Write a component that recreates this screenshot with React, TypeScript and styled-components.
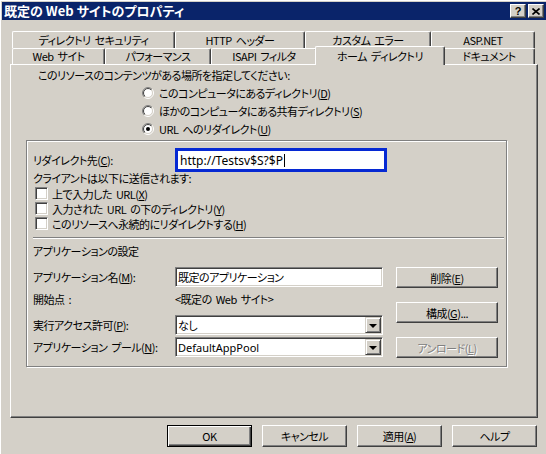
import React from 'react'
import styled, { createGlobalStyle, css } from 'styled-components'

const face = '#d4d0c8'
const shadow = '#808080'
const darkShadow = '#404040'

const GlobalStyle = createGlobalStyle`
  html, body {
    margin: 0;
    padding: 0;
    background: ${face};
  }
  body {
    font-family: "Noto Sans CJK JP", "Noto Sans", sans-serif;
    font-size: 11px;
    letter-spacing: -0.5px;
    word-spacing: 2px;
    color: #000;
    font-feature-settings: "palt" 1;
  }
`

const Window = styled.div`
  width: 546px;
  height: 454px;
  box-sizing: border-box;
  padding: 2px 0 0 2px;
  background: ${face};
  box-shadow: inset 1px 1px 0 #fff;
  display: flex;
  flex-direction: column;
  overflow: hidden;
`

const TitleBar = styled.div`
  height: 18px;
  background: #0a246a;
  display: flex;
  align-items: flex-start;
  padding-right: 2px;
`

const TitleText = styled.div`
  flex: 1;
  color: #fff;
  font-weight: bold;
  font-size: 13px;
  letter-spacing: 0;
  word-spacing: 0;
  line-height: 18px;
  padding-left: 2px;
  white-space: nowrap;
`

const CaptionButton = styled.div`
  width: 16px;
  height: 14px;
  margin-top: 2px;
  box-sizing: border-box;
  background: ${face};
  border: 1px solid;
  border-color: #fff ${darkShadow} ${darkShadow} #fff;
  box-shadow: inset -1px -1px 0 ${shadow};
  display: flex;
  align-items: center;
  justify-content: center;
  font-family: "Liberation Sans", Arial, sans-serif;
  font-weight: bold;
  font-size: 11px;
  letter-spacing: 0;
  line-height: 12px;
  & + & {
    margin-left: 2px;
  }
`

const Body = styled.div`
  padding: 11px 8px 0 8px;
  display: flex;
  flex-direction: column;
`

const TabStrip = styled.div`
  padding-left: 2px;
  display: flex;
  flex-direction: column;
`

const TabRow = styled.div`
  display: flex;
`

const Tab = styled.div<{ $w: number; $back?: boolean; $selected?: boolean }>`
  width: ${(p) => p.$w}px;
  height: ${(p) => (p.$back ? 17 : 16)}px;
  box-sizing: border-box;
  flex: none;
  background: ${face};
  border-left: 1px solid #fff;
  border-top: 1px solid #fff;
  border-right: 1px solid ${darkShadow};
  border-radius: 2px 2px 0 0;
  box-shadow: inset -1px 0 0 ${shadow};
  text-align: center;
  line-height: ${(p) => (p.$back ? 16 : 15)}px;
  white-space: nowrap;
  ${(p) =>
    p.$selected &&
    css`
      position: relative;
      z-index: 2;
      width: ${p.$w + 4}px;
      height: 19px;
      margin: -2px -2px -1px;
      line-height: 18px;
    `}
`

const Panel = styled.div`
  width: 528px;
  height: 354px;
  box-sizing: border-box;
  border: 1px solid;
  border-color: #fff ${darkShadow} ${darkShadow} #fff;
  box-shadow: inset -1px -1px 0 ${shadow};
  display: flex;
  flex-direction: column;
  align-items: flex-start;
`

const Heading = styled.div`
  margin: 3px 0 0 27px;
  line-height: 14px;
  white-space: nowrap;
`

const RadioList = styled.div`
  margin: 2px 0 0 131px;
  display: flex;
  flex-direction: column;
`

const OptionRow = styled.label<{ $h: number }>`
  height: ${(p) => p.$h}px;
  line-height: 14px;
  display: flex;
  align-items: center;
  gap: ${(p) => (p.$h === 18 ? 5 : 4)}px;
  white-space: nowrap;
`

const GroupBox = styled.div`
  margin: 2px 0 0 15px;
  width: 481px;
  height: 227px;
  box-sizing: border-box;
  border: 1px solid ${shadow};
  box-shadow: 1px 1px 0 #fff, inset 1px 1px 0 #fff;
  padding: 7px 2px 0 6px;
  display: flex;
  flex-direction: column;
`

const FieldRow = styled.div`
  display: flex;
  align-items: center;
  height: 24px;
`

const LabelCell = styled.div`
  width: 142px;
  flex: none;
  white-space: nowrap;
`

const RedirectBox = styled.div`
  width: 212px;
  height: 24px;
  box-sizing: border-box;
  border: 3px solid #0629d3;
  background: #fff;
  display: flex;
  align-items: center;
  padding-left: 2px;
  font-family: "Noto Sans", "Noto Sans CJK JP", sans-serif;
  font-size: 12px;
  letter-spacing: 0;
  white-space: nowrap;
`

const Caret = styled.span`
  display: inline-block;
  width: 1px;
  height: 13px;
  background: #000;
  margin-left: 1px;
`

const PlainLine = styled.div<{ $mt: number }>`
  margin-top: ${(p) => p.$mt}px;
  line-height: 14px;
  white-space: nowrap;
`

const CheckList = styled.div`
  margin: 1px 0 0 2px;
  display: flex;
  flex-direction: column;
`

const CheckBox = styled.span`
  width: 13px;
  height: 13px;
  box-sizing: border-box;
  flex: none;
  background: #fff;
  border: 1px solid;
  border-color: ${shadow} #fff #fff ${shadow};
  box-shadow: inset 1px 1px 0 ${darkShadow}, inset -1px -1px 0 ${face};
`

const Separator = styled.div`
  margin: 6px 0 0 0;
  height: 0;
  border-top: 1px solid ${shadow};
  border-bottom: 1px solid #fff;
`

const AppArea = styled.div`
  margin-top: 9px;
  display: flex;
  align-items: flex-start;
`

const AppGrid = styled.div`
  display: grid;
  grid-template-columns: 142px 208px;
  grid-template-rows: 20px 28px 22px 20px;
  align-items: start;
`

const GridLabel = styled.div<{ $h: number }>`
  height: ${(p) => p.$h}px;
  display: flex;
  align-items: center;
  white-space: nowrap;
`

const Sunken = styled.div`
  width: 208px;
  height: 20px;
  box-sizing: border-box;
  background: #fff;
  border: 1px solid;
  border-color: ${shadow} #fff #fff ${shadow};
  box-shadow: inset 1px 1px 0 ${darkShadow}, inset -1px -1px 0 ${face};
  display: flex;
  align-items: center;
  padding: 1px 1px 1px 2px;
  white-space: nowrap;
`

const FieldText = styled.span<{ $latin?: boolean }>`
  flex: 1;
  ${(p) =>
    p.$latin &&
    css`
      font-family: "Noto Sans", "Noto Sans CJK JP", sans-serif;
      letter-spacing: 0;
    `}
`

const DropButton = styled.span`
  width: 16px;
  height: 16px;
  box-sizing: border-box;
  flex: none;
  background: ${face};
  border: 1px solid;
  border-color: ${face} ${darkShadow} ${darkShadow} ${face};
  box-shadow: inset 1px 1px 0 #fff, inset -1px -1px 0 ${shadow};
  display: flex;
  align-items: center;
  justify-content: center;
  &::after {
    content: '';
    width: 0;
    height: 0;
    border-left: 4px solid transparent;
    border-right: 4px solid transparent;
    border-top: 4px solid #000;
    margin-top: 1px;
  }
`

const PlainValue = styled.div`
  height: 24px;
  display: flex;
  align-items: center;
  white-space: nowrap;
`

const ButtonColumn = styled.div`
  margin-left: 13px;
  display: flex;
  flex-direction: column;
  gap: 14px;
`

const Button = styled.div<{ $w: number; $default?: boolean; $disabled?: boolean }>`
  width: ${(p) => p.$w}px;
  height: ${(p) => (p.$w === 102 ? 21 : 22)}px;
  box-sizing: border-box;
  flex: none;
  background: ${face};
  display: flex;
  align-items: center;
  justify-content: center;
  white-space: nowrap;
  border: 1px solid;
  border-color: #fff ${darkShadow} ${darkShadow} #fff;
  box-shadow: inset -1px -1px 0 ${shadow};
  ${(p) =>
    p.$default &&
    css`
      border-color: #000;
      box-shadow: inset 1px 1px 0 #fff, inset -1px -1px 0 ${darkShadow}, inset -2px -2px 0 ${shadow};
    `}
  ${(p) =>
    p.$disabled &&
    css`
      color: ${shadow};
      text-shadow: 1px 1px 0 #fff;
    `}
`

const Footer = styled.div`
  margin: 7px 1px 0 0;
  display: flex;
  justify-content: flex-end;
  gap: 10px;
`

const Radio = ({ checked }: { checked?: boolean }) => (
  <svg width="12" height="12" viewBox="0 0 12 12">
    <defs>
      <linearGradient id="rOuter" x1="0" y1="0" x2="1" y2="1">
        <stop offset="0.5" stopColor={shadow} />
        <stop offset="0.5" stopColor="#fff" />
      </linearGradient>
      <linearGradient id="rInner" x1="0" y1="0" x2="1" y2="1">
        <stop offset="0.5" stopColor={darkShadow} />
        <stop offset="0.5" stopColor={face} />
      </linearGradient>
    </defs>
    <circle cx="6" cy="6" r="5.5" fill="none" stroke="url(#rOuter)" />
    <circle cx="6" cy="6" r="4.5" fill="#fff" stroke="url(#rInner)" />
    {checked && <circle cx="6" cy="6" r="2" fill="#000" />}
  </svg>
)

const backTabs = [
  { label: 'ディレクトリ セキュリティ', w: 163 },
  { label: 'HTTP ヘッダー', w: 130 },
  { label: 'カスタム エラー', w: 126 },
  { label: 'ASP.NET', w: 104 },
]

const frontTabs = [
  { label: 'Web サイト', w: 93 },
  { label: 'パフォーマンス', w: 106 },
  { label: 'ISAPI フィルタ', w: 106 },
  { label: 'ホーム ディレクトリ', w: 126, selected: true },
  { label: 'ドキュメント', w: 92 },
]

export default function App() {
  return (
    <>
      <GlobalStyle />
      <Window>
        <TitleBar>
          <TitleText>既定の Web サイトのプロパティ</TitleText>
          <CaptionButton>?</CaptionButton>
          <CaptionButton>
            <svg width="8" height="7" viewBox="0 0 8 7">
              <path d="M0.5 0.5 L7.5 6.5 M7.5 0.5 L0.5 6.5" stroke="#000" strokeWidth="1.6" />
            </svg>
          </CaptionButton>
        </TitleBar>

        <Body>
          <TabStrip>
            <TabRow>
              {backTabs.map((t) => (
                <Tab key={t.label} $w={t.w} $back>
                  {t.label}
                </Tab>
              ))}
            </TabRow>
            <TabRow>
              {frontTabs.map((t) => (
                <Tab key={t.label} $w={t.w} $selected={t.selected}>
                  {t.label}
                </Tab>
              ))}
            </TabRow>
          </TabStrip>

          <Panel>
            <Heading>このリソースのコンテンツがある場所を指定してください:</Heading>
            <RadioList>
              <OptionRow $h={18}>
                <Radio />
                <span>
                  このコンピュータにあるディレクトリ(<u>D</u>)
                </span>
              </OptionRow>
              <OptionRow $h={18}>
                <Radio />
                <span>
                  ほかのコンピュータにある共有ディレクトリ(<u>S</u>)
                </span>
              </OptionRow>
              <OptionRow $h={18}>
                <Radio checked />
                <span>
                  URL へのリダイレクト(<u>U</u>)
                </span>
              </OptionRow>
            </RadioList>

            <GroupBox>
              <FieldRow>
                <LabelCell>
                  リダイレクト先(<u>C</u>):
                </LabelCell>
                <RedirectBox>
                  http://Testsv$S?$P
                  <Caret />
                </RedirectBox>
              </FieldRow>
              <PlainLine $mt={-1}>クライアントは以下に送信されます:</PlainLine>
              <CheckList>
                <OptionRow $h={15}>
                  <CheckBox />
                  <span>
                    上で入力した URL(<u>X</u>)
                  </span>
                </OptionRow>
                <OptionRow $h={15}>
                  <CheckBox />
                  <span>
                    入力された URL の下のディレクトリ(<u>Y</u>)
                  </span>
                </OptionRow>
                <OptionRow $h={15}>
                  <CheckBox />
                  <span>
                    このリソースへ永続的にリダイレクトする(<u>H</u>)
                  </span>
                </OptionRow>
              </CheckList>

              <Separator />
              <PlainLine $mt={5}>アプリケーションの設定</PlainLine>

              <AppArea>
                <AppGrid>
                  <GridLabel $h={20}>
                    アプリケーション名(<u>M</u>):
                  </GridLabel>
                  <Sunken>
                    <FieldText>既定のアプリケーション</FieldText>
                  </Sunken>
                  <GridLabel $h={24}>開始点 :</GridLabel>
                  <PlainValue>&lt;既定の Web サイト&gt;</PlainValue>
                  <GridLabel $h={20}>
                    実行アクセス許可(<u>P</u>):
                  </GridLabel>
                  <Sunken>
                    <FieldText>なし</FieldText>
                    <DropButton />
                  </Sunken>
                  <GridLabel $h={20}>
                    アプリケーション プール(<u>N</u>):
                  </GridLabel>
                  <Sunken>
                    <FieldText $latin>DefaultAppPool</FieldText>
                    <DropButton />
                  </Sunken>
                </AppGrid>
                <ButtonColumn>
                  <Button $w={102}>
                    削除(<u>E</u>)
                  </Button>
                  <Button $w={102}>
                    構成(<u>G</u>)...
                  </Button>
                  <Button $w={102} $disabled>
                    アンロード(<u>L</u>)
                  </Button>
                </ButtonColumn>
              </AppArea>
            </GroupBox>
          </Panel>

          <Footer>
            <Button $w={85} $default>
              OK
            </Button>
            <Button $w={85}>キャンセル</Button>
            <Button $w={85}>
              適用(<u>A</u>)
            </Button>
            <Button $w={85}>ヘルプ</Button>
          </Footer>
        </Body>
      </Window>
    </>
  )
}
